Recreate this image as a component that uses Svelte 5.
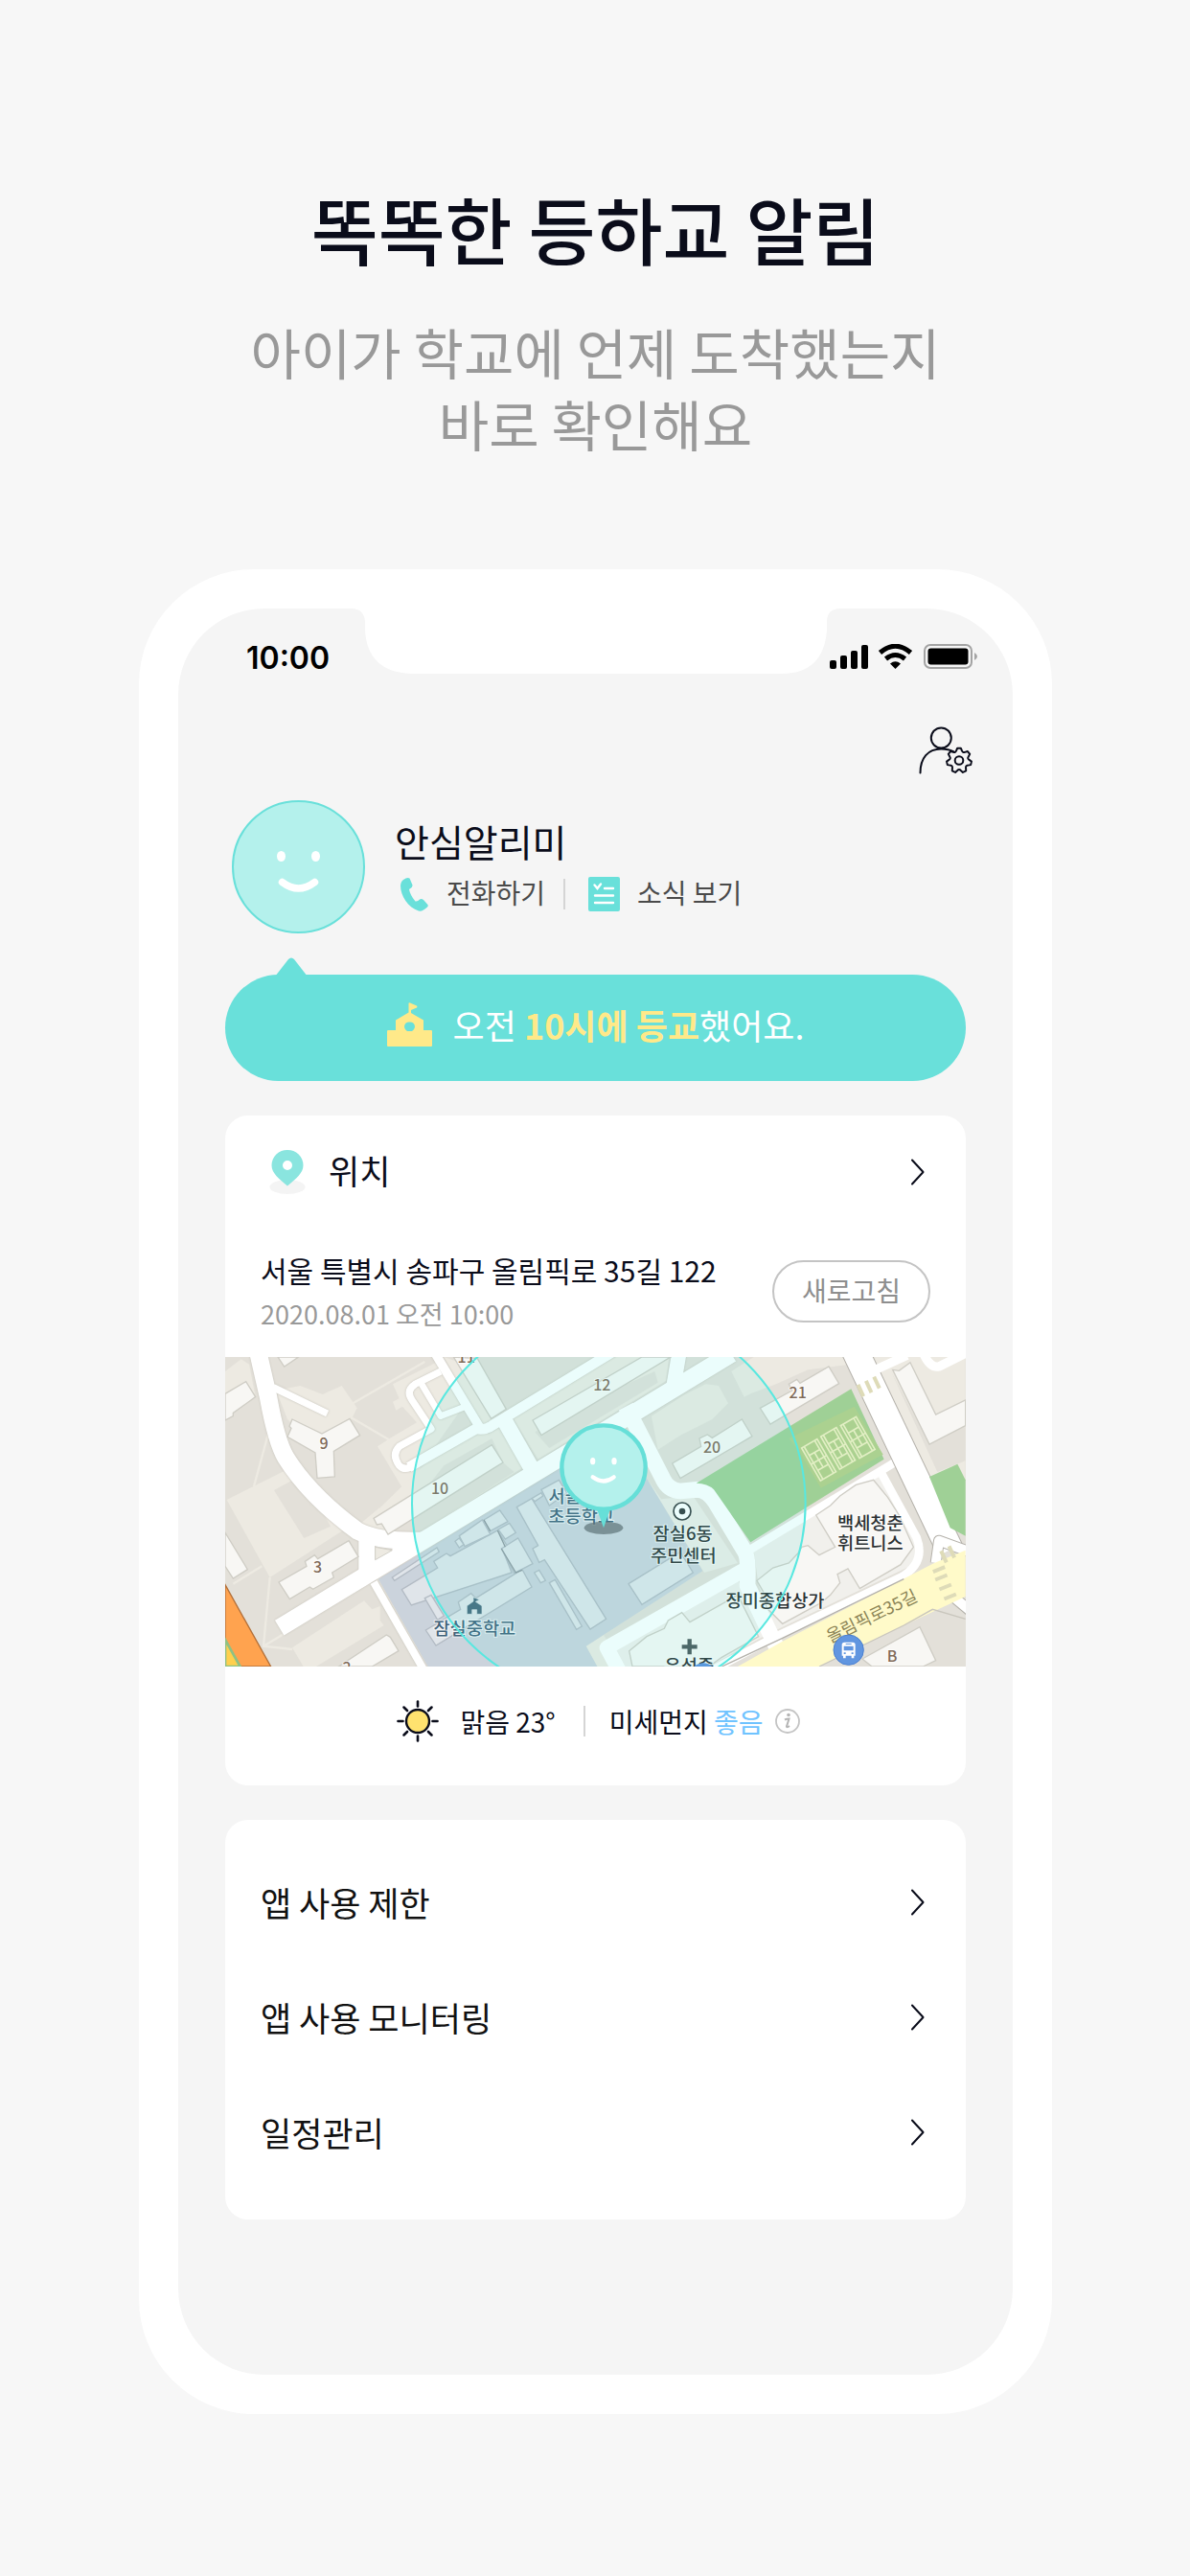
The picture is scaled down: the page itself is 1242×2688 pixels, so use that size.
<script>
  const menu = ['앱 사용 제한', '앱 사용 모니터링', '일정관리'];

  const gearPath = (cx, cy, teeth, outer, inner) => {
    const step = (Math.PI * 2) / teeth;
    const at = (r, a) => `${(cx + r * Math.sin(a)).toFixed(2)},${(cy - r * Math.cos(a)).toFixed(2)}`;
    let d = '';
    for (let k = 0; k < teeth; k++) {
      const a = k * step;
      d += `${k ? 'L' : 'M'}${at(outer, a - 0.14)} L${at(outer, a + 0.14)} `;
      d += `L${at(inner + 1, a + 0.28)} Q${at(inner - 1, a + step / 2)} ${at(inner + 1, a + step - 0.28)} `;
    }
    return d + 'Z';
  };
  const gear = gearPath(42, 35.5, 7, 13, 9.6);

  // Map geometry, in map units (three per pixel at full width).
  const landWest = [
    '20,492 200,402 380,590 155,735',
    '175,150 250,135 320,162 380,135 428,205 410,240 300,330 210,240',
    '540,130 680,60 760,200 620,400 570,455 492,325 530,300 615,250 570,200 550,212 540,185 560,175',
    '15,90 65,52 90,68 110,170 15,240',
    '225,955 450,808 475,835 500,825 500,870 512,885 300,1014 260,1014',
    '915,235 1230,45 1405,45 1395,120 995,365',
    '640,380 805,280 870,262 952,388 610,605 440,575',
    '700,45 830,90 895,208 830,255 815,250'
  ];
  const landWestDark = [
    '168,462 255,415 345,575 262,612',
    '700,385 850,300 885,375 920,405 610,605 530,600',
    '805,45 1000,45 1180,45 895,208',
    '985,280 1140,190 1360,90 1370,125 1030,330'
  ];
  const homesWest = [
    '180,45 245,45 200,75',
    '15,160 80,122 110,170 40,220 40,230 15,243',
    '15,595 85,710 40,738 15,700',
    '225,240 318,285 405,238 437,290 355,340 358,420 303,424 297,345 210,295 222,268 216,262',
    '183,750 270,700 265,685 295,665 305,677 402,620 432,670 350,720 355,735 290,772 280,765 217,803',
    '370,1014 520,915 532,922 558,965 475,1014',
    '480,550 850,320 885,375 525,600 505,567 490,570',
    '730,45 805,50 895,208 848,238',
    '978,243 1320,45 1410,45 1005,290'
  ];
  const schoolBlocks = [
    '568,773 680,705 668,685 708,660 720,668 868,588 900,640 885,650 912,720 598,822',
    '748,605 820,555 845,600 765,638',
    '735,622 748,612 762,632 748,642',
    '825,555 875,525 900,560 845,590',
    '870,585 905,565 925,595 892,615',
    '880,645 932,612 978,692 920,722',
    '640,800 660,790 700,855 680,868',
    '643,900 752,835 745,812 785,785 800,800 945,710 975,765 675,948',
    '975,488 1005,470 1010,480 985,497',
    '1005,460 1060,430 1085,470 1030,510',
    '538,735 678,642 685,655 545,745',
    '983,720 998,712 1018,745 1003,752',
    '928,515 975,488 1208,865 1158,897 1015,680 998,688 978,645 995,635',
    '1030,752 1048,742 1132,888 1115,898',
    '1278,755 1440,655 1480,720 1320,820'
  ];
  const homesEast = [
    '275,378 365,325 360,300 385,288 400,298 493,240 525,293 300,425',
    '550,205 650,150 640,130 665,115 675,127 765,75 797,128 582,255',
    '965,85 985,88 1020,62 1100,225 1193,180 1193,260 1080,318',
    '725,540 770,510 800,480 850,445 905,430 950,485 985,540 1030,640 990,695 862,770 825,708 792,725 800,752 770,790 740,815 620,880 570,830 560,780 540,745 590,705 640,690 668,660 680,640 700,635 735,665 785,640',
    '150,1014 140,965 195,920 250,895 262,870 305,845 330,875 480,790 545,920 430,985 390,1014',
    '870,990 1050,890 1100,995 1060,1014 900,1014'
  ];
  const courts = [[680, 330], [740, 294], [802, 260]];
  const crossings = [
    [865, 150, 65], [890, 138, 65], [915, 125, 65], [1125, 670, 65], [1150, 655, 65],
    [1110, 710, -22], [1117, 735, -22], [1130, 765, -22], [1145, 795, -22]
  ];
  const rays = [0, 45, 90, 135, 180, 225, 270, 315];
</script>

{#snippet chevron()}
  <svg class="chevron" viewBox="0 0 16 28" aria-hidden="true"><path d="M2 1.500L13.500 14L2 26.500" /></svg>
{/snippet}

<main>
  <header class="intro">
    <h1>똑똑한 등하교 알림</h1>
    <p>아이가 학교에 언제 도착했는지<br />바로 확인해요</p>
  </header>

  <section class="phone">
    <div class="screen">
      <div class="status">
        <span class="time">10:00</span>
        <svg class="notch" viewBox="0 0 510 68" aria-hidden="true">
          <path d="M0 0H510Q496 0 496 14V22Q493 68 448 68H62Q16 66 14 22V14Q13 0 0 0Z" fill="#fff" />
        </svg>
        <svg class="signals" viewBox="0 0 155 28" aria-hidden="true">
          <rect x="0" y="17" width="7" height="9" rx="2" />
          <rect x="11" y="12" width="7" height="14" rx="2" />
          <rect x="22" y="7" width="7" height="19" rx="2" />
          <rect x="33" y="1" width="7" height="25" rx="2" />
          <g fill="none" stroke="#000" stroke-width="5">
            <path d="M52.500 9Q68.500 -4.500 84.500 9" />
            <path d="M58.500 15.500Q68.500 7.500 78.500 15.500" />
          </g>
          <path d="M63 20.500Q68.500 16 74 20.500L68.500 26Z" />
          <rect x="99" y="1" width="49" height="24" rx="6" fill="none" stroke="#a3a3a3" stroke-width="2" />
          <rect x="102.500" y="4.500" width="42" height="17" rx="3" />
          <path d="M151 9Q157 13 151 17Z" fill="#a3a3a3" />
        </svg>
      </div>

      <div class="toolbar">
        <button class="account" aria-label="계정 설정">
          <svg viewBox="0 0 56 50" aria-hidden="true">
            <circle cx="23.300" cy="12" r="10.500" />
            <path d="M1.500 48.500C1.500 33 9.500 23.500 23.300 23.500Q31 23.500 36.500 26.500" />
            <path d={gear} fill="#f5f5f5" />
            <circle cx="42" cy="35.500" r="4.300" />
          </svg>
        </button>
      </div>

      <div class="content">
        <section class="profile">
          <svg class="avatar" viewBox="0 0 139 139" role="img" aria-label="프로필">
            <circle cx="69.500" cy="69.500" r="68.500" fill="#b4f1ec" stroke="#69e0da" stroke-width="2" />
            <ellipse cx="51.500" cy="58.500" rx="4.500" ry="5.500" fill="#fff" />
            <ellipse cx="87.500" cy="58.500" rx="4.500" ry="5.500" fill="#fff" />
            <path d="M52.500 85.500Q69.500 98.500 86.500 85.500" fill="none" stroke="#fff" stroke-width="7.500" stroke-linecap="round" />
          </svg>
          <div class="who">
            <h2>안심알리미</h2>
            <div class="actions">
              <button>
                <svg class="call" viewBox="0 0 40 36" aria-hidden="true">
                  <path d="M9 3Q13 0 15.500 1.500L18.500 8.500Q19 11 15 13Q16 19 21.500 25.500Q24 26 26 23.500Q28 22.500 30 24L34 28.500Q35.500 30 34 31.500Q29 36.500 25 35.500C14 32 6 20 6 9Q6.500 4.500 9 3Z" fill="#69e0da" />
                </svg>
                전화하기
              </button>
              <i class="bar"></i>
              <button class="newsbtn">
                <svg class="news" viewBox="0 0 33 36" aria-hidden="true">
                  <rect width="33" height="36" rx="2" fill="#69e0da" />
                  <path d="M6.500 8.500L9.500 12L13 7.500M17 12H26M7 19.500H26M7 27H26" fill="none" stroke="#fff" stroke-width="2.400" stroke-linecap="round" />
                </svg>
                소식 보기
              </button>
            </div>
          </div>
        </section>

        <section class="bubble">
          <svg class="tip" viewBox="0 0 34 20" aria-hidden="true"><path d="M0 20L14 2Q17 -1 20 2L34 20Z" fill="#69e0da" /></svg>
          <svg class="school" viewBox="0 0 47 46" aria-hidden="true">
            <path fill="#ffe989" fill-rule="evenodd" d="M22.500 1Q22.500 0 24 .5L31 3.500Q32 4.500 31 5.500L25 8V11L38 18.500V29H46Q47 29 47 30V45Q47 46 46 46H1Q0 46 0 45V30Q0 29 1 29H9V18.500L22.500 10.500ZM23.500 20.500A4.800 4.800 0 1 0 23.500 30A4.800 4.800 0 1 0 23.500 20.500Z" />
          </svg>
          <p>오전 <b>10시에 등교</b>했어요.</p>
        </section>

        <section class="card">
          <a class="head" href="#location">
            <svg class="pin" viewBox="0 0 38 48" aria-hidden="true">
              <ellipse cx="19" cy="39.500" rx="18.500" ry="7.500" fill="#f4f4f4" />
              <path fill="#8ae5df" fill-rule="evenodd" d="M19 1A16 16 0 0 1 35.500 17C35.500 25 28 31 19 38.500C10 31 2.500 25 2.500 17A16 16 0 0 1 19 1ZM19 12A5 5 0 1 0 19 22A5 5 0 1 0 19 12Z" />
            </svg>
            <span>위치</span>
            {@render chevron()}
          </a>
          <div class="place">
            <div>
              <p class="address">서울 특별시 송파구 올림픽로 35길 122</p>
              <p class="date">2020.08.01 오전 10:00</p>
            </div>
            <button class="refresh">새로고침</button>
          </div>

          <svg class="map" viewBox="15 45 2319 969" role="img" aria-label="현재 위치 지도">
            <rect x="0" y="0" width="2400" height="1100" fill="#e3e0d9" />
            <g fill="#edeae2">
              {#each landWest as p}<polygon points={p} />{/each}
            </g>
            <g fill="#e3e0d9">
              {#each landWestDark as p}<polygon points={p} />{/each}
            </g>
            <g fill="none" stroke="#edeae2" stroke-width="7">
              <path d="M415,190L640,60M410,235L530,305M150,285L105,450M155,735L135,950L225,960M40,755L130,700M135,950L210,905M440,570L500,520" />
            </g>
            <g transform="translate(1140 0)" fill="#edeae2">
              <polygon points="210,230 310,165 380,130 420,135 450,190 400,240 300,290 230,335" />
              <polygon points="460,90 530,45 810,45 820,70 700,85 600,130 520,160 500,170" />
              <polygon points="905,45 1193,45 1193,600 1080,420 930,100" />
              <polygon fill="#e3e0d9" points="960,90 1080,318 1193,260 1193,370 1105,405" />
              <polygon points="240,490 340,480 480,690 375,720 195,425" fill="#edece6" />
              <polygon points="5,950 60,915 120,1014 40,1014" />
              <polygon points="95,965 480,740 560,920 390,1014 120,1014" fill="#f1f0ec" />
              <polygon points="530,650 930,410 1060,640 1040,690 600,900 545,760" fill="#f1f0ec" />
            </g>

            <polygon points="495,740 1247,278 1335,425 1510,715 1145,950 1180,1014 650,1014" fill="#cbd3dc" />

            {#snippet roads()}
              <path d="M118,30L150,170Q175,310 205,360Q280,480 430,590Q500,625 640,620" stroke-width="55" />
              <path d="M185,893L1600,35" stroke-width="55" stroke-linecap="butt" />
              <path d="M1260,10L850,260Q830,275 800,270L590,390" stroke-width="32" />
              <path d="M670,30L815,270" stroke-width="28" />
              <path d="M890,245L975,395" stroke-width="50" />
              <path d="M1437,30L1420,130" stroke-width="46" />
              <path d="M690,90L610,130Q580,150 600,180L660,270L560,325Q535,350 560,385Q580,405 610,380" stroke-width="22" />
              <path d="M630,130L690,230L780,195" stroke-width="20" />
              <path d="M165,140L335,222" stroke-width="22" stroke-linecap="butt" />
              <path d="M458,600V730" stroke-width="50" />
              <path d="M480,750L640,1030" stroke-width="24" />
            {/snippet}
            <g fill="none" stroke="#d3d1c9" stroke-linejoin="round" class="casing">{@render roads()}</g>
            <g fill="none" stroke="#fff" stroke-linejoin="round">{@render roads()}</g>
            <polygon points="485,640 538,650 485,680" fill="#edeae2" stroke="#d3d1c9" stroke-width="3" />

            <g transform="translate(1140 0)" fill="none" stroke="#fff" stroke-linejoin="round">
              <path d="M130,200L245,425Q262,462 300,465L350,460Q385,460 410,500L500,650Q515,670 510,760L600,950" stroke-width="50" />
              <path d="M520,700L70,955L110,1030" stroke-width="46" />
              <path d="M515,650L980,370" stroke-width="26" />
              <path d="M390,1030L600,920L990,735Q1070,690 1040,610L925,400" stroke-width="26" />
              <path d="M840,10L1145,650" stroke="#b4b1aa" stroke-width="88" />
              <path d="M840,10L1145,650" stroke-width="82" />
              <path d="M900,90L1010,40M1060,30Q1080,80 1110,75L1200,30" stroke-width="28" />
              <path d="M1100,690L1110,620L1220,660M1100,750L1220,850" stroke="#b4b1aa" stroke-width="36" />
              <path d="M1100,690L1110,620L1220,660M1100,750L1220,850" stroke-width="30" />
            </g>

            <g fill="#f8f7f4" stroke="#cfcdc5" stroke-width="4">
              {#each homesWest as p}<polygon points={p} />{/each}
              <g transform="translate(1140 0)">
                {#each homesEast as p}<polygon points={p} />{/each}
              </g>
            </g>
            <g fill="#e0e5ea" stroke="#b3bbc4" stroke-width="4">
              {#each schoolBlocks as p}<polygon points={p} />{/each}
            </g>
            <path d="M825,555L845,590M868,588L892,640M880,645L925,720L945,712" fill="none" stroke="#8f979e" stroke-width="4" />

            <polygon points="15,758 158,1014 15,1014" fill="#ffa34f" stroke="#b3703a" stroke-width="4" />
            <polygon points="15,930 62,1014 15,1014" fill="#ffd04d" stroke="#8fc183" stroke-width="8" />

            <g transform="translate(1140 0)">
              <path d="M350,440L835,145L938,365L520,625Q440,510 405,460Q385,440 350,440Z" fill="#9fd096" />
              <polygon points="640,300 845,200 935,350 740,455 675,345" fill="#abd190" />
              <g fill="none" stroke="#e2efc4" stroke-width="5">
                {#each courts as [x, y]}
                  <g transform="translate({x} {y}) rotate(-30)">
                    <rect width="56" height="118" />
                    <path d="M9,0V118M47,0V118M9,32H47M9,86H47M0,59H56M28,32V86" />
                  </g>
                {/each}
              </g>
              <polygon points="1080,420 1168,380 1193,430 1193,605 1145,580" fill="#9fd096" />
              <polygon points="480,1014 620,935 1095,690 1193,650 1193,795 1000,885 735,1014" fill="#fffac9" />
              <path d="M430,1014L620,925L1000,740" fill="none" stroke="#b4b1aa" stroke-width="4" />
              <path d="M735,1014L1000,885L1090,835L1193,865" fill="none" stroke="#c9c6bd" stroke-width="4" />
              <g fill="#dedbb8">
                {#each crossings as [x, y, a]}
                  <rect x="-20" y="-6" width="40" height="12" transform="translate({x} {y}) rotate({a})" />
                {/each}
              </g>
            </g>

            <g class="label number">
              <text x="324" y="332">9</text>
              <text x="687" y="473">10</text>
              <text x="305" y="719">3</text>
              <text x="396" y="1036">2</text>
              <text x="770" y="62">11</text>
              <text x="1195" y="151">12</text>
              <text x="1539" y="345">20</text>
              <text x="1808" y="175">21</text>
              <text x="2103" y="998">B</text>
            </g>
            <g class="label campus">
              <text x="1079" y="502">서울</text>
              <text x="1130" y="565">초등학교</text>
              <text x="796" y="914">잠실중학교</text>
            </g>
            <g fill="#46687c" stroke="#dbe6ea" stroke-width="2">
              <path d="M772,850V824L792,810V797L811,805L799,811L819,824V850H803V836H788V850Z" />
            </g>
            <g class="label">
              <text x="1448" y="617">잠실6동</text>
              <text x="1450" y="686">주민센터</text>
              <text x="2035" y="586">백세청춘</text>
              <text x="2035" y="648">휘트니스</text>
              <text x="1737" y="829">장미종합상가</text>
              <text x="1468" y="1032">유석중</text>
            </g>
            <text class="label road" transform="translate(2048 874) rotate(-26)">올림픽로35길</text>
            <circle cx="1446" cy="528" r="27" fill="#fff" stroke="#333b3d" stroke-width="5" />
            <circle cx="1446" cy="528" r="10" fill="#333b3d" />
            <path d="M1469,928V976M1445,952H1493" stroke="#4a5557" stroke-width="13" />
            <circle cx="1512" cy="1044" r="41" fill="#5a8fdc" />
            <circle cx="1967" cy="962" r="47" fill="#6196e0" stroke="#4a7fd0" stroke-width="3" />
            <path fill="#fff" fill-rule="evenodd" d="M1954,938H1980Q1988,938 1988,946V980H1984V988H1976V980H1958V988H1950V980H1946V946Q1946,938 1954,938ZM1952,950V964H1982V950ZM1952,970V975H1958V970ZM1976,970V975H1982V970ZM1958,942V945H1976V942Z" />

            <circle cx="1216" cy="504" r="616" fill="#5aebe6" fill-opacity=".12" stroke="#58e8e0" stroke-width="6" />
            <ellipse cx="1200" cy="580" rx="61" ry="20" fill="#5e7377" fill-opacity=".7" />
            <path d="M1170,500H1230L1216,535L1200,580L1184,535Z" fill="#66dfd8" />
            <circle cx="1200" cy="390" r="131" fill="#b4f1ec" stroke="#66dfd8" stroke-width="13" />
            <ellipse cx="1166" cy="371" rx="8" ry="11" fill="#fff" />
            <ellipse cx="1233" cy="371" rx="8" ry="11" fill="#fff" />
            <path d="M1166,421Q1200,446 1232,421" fill="none" stroke="#fff" stroke-width="13" stroke-linecap="round" />
          </svg>

          <div class="weather">
            <svg class="sun" viewBox="0 0 44 44" aria-hidden="true">
              <circle cx="22" cy="22" r="12" fill="#ffe26f" stroke="#0a0c1a" stroke-width="2.400" />
              {#each rays as a}
                <path d="M22 1.500V6.500" transform="rotate({a} 22 22)" stroke="#0a0c1a" stroke-width="2.600" stroke-linecap="round" />
              {/each}
            </svg>
            <span class="sky">맑음 23°</span>
            <i class="bar"></i>
            <span>미세먼지 <em>좋음</em></span>
            <button class="info" aria-label="미세먼지 정보">
              <svg viewBox="0 0 26 26" aria-hidden="true">
                <circle cx="13" cy="13" r="12" fill="none" stroke="#c4c4c4" stroke-width="1.800" />
                <circle cx="14" cy="6.500" r="1.800" fill="#b5b5b5" />
                <path d="M10 11.500Q12 10.500 14.500 10.500L12 18.500Q12 20 15 18" fill="none" stroke="#b5b5b5" stroke-width="2" />
              </svg>
            </button>
          </div>
        </section>

        <nav class="card menu">
          {#each menu as item}
            <a href="#menu"><span>{item}</span>{@render chevron()}</a>
          {/each}
        </nav>
      </div>
    </div>
  </section>
</main>

<style>
  :global(body) {
    background: #f7f7f7;
  }
  main {
    padding: 190px 144px 169px 145px;
    color: #0a0c1a;
    font-family: 'Noto Sans CJK KR', sans-serif;
    font-size: 28px;
    line-height: 40px;
  }
  h1, h2, p {
    margin: 0;
    font-weight: 400;
  }
  button {
    display: flex;
    align-items: center;
    padding: 0;
    border: 0;
    background: none;
    color: inherit;
    font: inherit;
    cursor: pointer;
  }
  a {
    display: flex;
    align-items: center;
    color: inherit;
    text-decoration: none;
  }
  svg {
    display: block;
    flex: none;
  }
  .intro {
    text-align: center;
  }
  h1 {
    font-size: 76px;
    line-height: 96px;
    font-weight: 500;
  }
  .intro p {
    margin-top: 43px;
    color: #999;
    font-size: 57px;
    line-height: 75px;
  }
  .phone {
    margin-top: 115px;
    padding: 41px;
    border-radius: 120px;
    background: #fff;
  }
  .screen {
    padding-bottom: 162px;
    border-radius: 90px;
    background: #f5f5f5;
  }
  .status {
    display: grid;
    grid-template-columns: minmax(0, 1fr) auto minmax(0, 1fr);
    height: 68px;
  }
  .time {
    padding: 36px 0 0 71px;
    color: #000;
    font: 600 32px/32px Inter, sans-serif;
  }
  .notch {
    width: 510px;
    height: 68px;
  }
  .signals {
    justify-self: end;
    width: 155px;
    height: 28px;
    margin: 37px 36px 0 0;
  }
  .toolbar {
    display: flex;
    justify-content: flex-end;
    padding: 55px 42px 0 0;
  }
  .account svg {
    width: 56px;
    height: 50px;
    fill: none;
    stroke: #0a0c1a;
    stroke-width: 2;
    stroke-linecap: round;
    stroke-linejoin: round;
  }
  .content {
    padding: 27px 49px 0;
  }
  .profile {
    display: flex;
    align-items: center;
    gap: 31px;
    padding-left: 7px;
  }
  .avatar {
    width: 139px;
    height: 139px;
  }
  .who {
    padding-bottom: 8px;
  }
  h2 {
    font-size: 39px;
    line-height: 52px;
  }
  .actions {
    display: flex;
    align-items: center;
    margin-top: 8px;
    color: #4a4a4a;
  }
  .actions button {
    gap: 14px;
  }
  .actions .newsbtn {
    gap: 18px;
  }
  .actions svg,
  .actions .bar {
    margin-top: 4px;
  }
  .call {
    width: 40px;
    height: 36px;
  }
  .news {
    width: 33px;
    height: 36px;
  }
  .bar {
    width: 2px;
    height: 32px;
    margin: 0 24px 0 19px;
    background: #d5d5d5;
  }
  .bubble {
    position: relative;
    display: flex;
    align-items: center;
    justify-content: center;
    gap: 22px;
    box-sizing: border-box;
    height: 111px;
    margin-top: 43px;
    padding-bottom: 8px;
    border-radius: 56px;
    background: #69e0da;
    color: #fff;
    font-size: 36px;
  }
  .bubble p {
    line-height: 48px;
  }
  .bubble b {
    color: #ffe989;
    font-weight: 700;
  }
  .tip {
    position: absolute;
    top: -18px;
    left: 52px;
    width: 34px;
    height: 20px;
  }
  .school {
    width: 47px;
    height: 46px;
  }
  .card {
    margin-top: 36px;
    overflow: hidden;
    border-radius: 24px;
    background: #fff;
  }
  .head {
    height: 117px;
    padding: 0 42px 0 46px;
    font-size: 35px;
  }
  .head span {
    margin: 0 auto 0 24px;
    padding-bottom: 4px;
  }
  .pin {
    width: 38px;
    height: 48px;
  }
  .chevron {
    width: 16px;
    height: 28px;
    fill: none;
    stroke: #0a0c1a;
    stroke-width: 2;
    stroke-linecap: round;
    stroke-linejoin: round;
  }
  .place {
    display: flex;
    align-items: center;
    justify-content: space-between;
    padding: 22px 37px 24px;
  }
  .address {
    font-size: 30px;
    line-height: 44px;
  }
  .date {
    padding-top: 3px;
    color: #999;
    font-size: 27px;
    line-height: 42px;
  }
  .refresh {
    height: 65px;
    padding: 0 29px 4px;
    border: 2px solid #c4c4c4;
    border-radius: 33px;
    color: #8e8e8e;
  }
  .map {
    width: 100%;
    height: auto;
  }
  .casing {
    filter: drop-shadow(0 0 3px #c4c1b8);
  }
  .label {
    fill: #2b3133;
    stroke: #fff;
    stroke-opacity: 0.7;
    stroke-width: 6px;
    paint-order: stroke;
    font-size: 56px;
    font-weight: 500;
    text-anchor: middle;
  }
  .number {
    fill: #806a58;
    font-size: 48px;
  }
  .campus {
    fill: #3f6179;
  }
  .road {
    fill: #8b8456;
    stroke: none;
    font-size: 54px;
    font-weight: 400;
  }
  .weather {
    display: flex;
    align-items: center;
    justify-content: center;
    padding: 35px 0 45px 6px;
  }
  .sun {
    width: 44px;
    height: 44px;
  }
  .sky {
    margin-left: 22px;
  }
  .weather .bar {
    margin: 0 25px 0 29px;
  }
  em {
    color: #6fc3ff;
    font-style: normal;
  }
  .info {
    margin-left: 12px;
  }
  .info svg {
    width: 26px;
    height: 26px;
  }
  .menu {
    padding: 26px 42px 31px 37px;
    color: #111;
    font-size: 35px;
  }
  .menu a {
    justify-content: space-between;
    height: 120px;
  }
</style>
